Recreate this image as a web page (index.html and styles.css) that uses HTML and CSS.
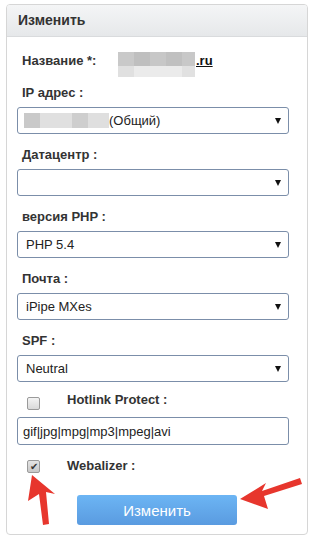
FILE: index.html
```html
<!DOCTYPE html>
<html>
  <head>
    <meta charset="UTF-8" />
    <title>Изменить</title>
    <link rel="stylesheet" href="styles.css">
  </head>
  <body>
    <div class="panel">
      <div class="panel-head">Изменить</div>
      <div class="panel-body">
        <div class="name-row">
          <div class="label name-label">Название *:</div>
          <div class="blur">
            <div class="blur-top">
              <span class="c1"></span><span class="c2"></span><span class="c3"></span><span class="c4"></span><span class="c5"></span>
            </div>
            <div class="blur-bottom">
              <span class="c6"></span><span class="c7"></span><span class="c8"></span>
            </div>
          </div>
          <a class="domain" href="#">.ru</a>
        </div>

        <div class="field">
          <div class="label">IP адрес :</div>
          <div class="select">
            <span class="ip-blur"><i class="b1"></i><i class="b2"></i><i class="b3"></i><i class="b4"></i></span>(Общий)
          </div>
        </div>
        <div class="field">
          <div class="label">Датацентр :</div>
          <div class="select"></div>
        </div>
        <div class="field">
          <div class="label">версия PHP :</div>
          <div class="select">PHP 5.4</div>
        </div>
        <div class="field">
          <div class="label">Почта :</div>
          <div class="select">iPipe MXes</div>
        </div>
        <div class="field">
          <div class="label">SPF :</div>
          <div class="select">Neutral</div>
        </div>
        <div class="field">
          <div class="check-row">
            <span class="check"></span>
            <span class="label">Hotlink Protect :</span>
          </div>
          <div class="text-input">gif|jpg|mpg|mp3|mpeg|avi</div>
        </div>
        <div class="check-row">
          <span class="check checked">&#10004;</span>
          <span class="label">Webalizer :</span>
        </div>
        <div class="actions">
          <button class="submit">Изменить</button>
        </div>
      </div>
    </div>

    <svg class="arrows" width="316" height="544" viewBox="0 0 316 544">
      <polygon points="32,475 55,494 46,492 49,524 43,525 39,494 28,501" />
      <polygon points="240,499 266,483 262,491 300,478 302,484 264,496 268,509" />
    </svg>
  </body>
</html>
```

FILE: styles.css
```css
body {
  margin: 0;
  background: #fff;
  font-family: 'Liberation Sans', Arial, sans-serif;
  color: #333;
}
.panel {
  width: 300px;
  margin: 4px 0 0 6px;
  border: 1px solid #d6d6d6;
  border-radius: 4px;
  overflow: hidden;
}
.panel-head {
  height: 31px;
  line-height: 31px;
  padding-left: 11px;
  font-size: 14px;
  font-weight: bold;
  color: #333;
  background: linear-gradient(#f4f5f6, #e6e8ea);
  border-bottom: 1px solid #d9dbdd;
}
.panel-body {
  padding: 15px 18px 9px 10px;
}
.label {
  font-size: 13px;
  font-weight: bold;
  line-height: 16px;
  color: #333;
  padding-left: 5px;
}
.name-row {
  display: flex;
  align-items: flex-start;
  height: 26px;
  margin-bottom: 7px;
}
.name-label {
  width: 96px;
  padding-top: 1px;
}
.blur {
  width: 77px;
}
.blur-top, .blur-bottom {
  display: flex;
}
.blur-top span {
  height: 14px;
}
.blur-bottom span {
  height: 11px;
}
.c1 { width: 16px; background: #c9c9c9; }
.c2 { width: 16px; background: #bfbfbf; }
.c3 { width: 16px; background: #c7c7c7; }
.c4 { width: 16px; background: #c0c0c0; }
.c5 { width: 13px; background: #c8c8c8; }
.c6 { width: 16px; background: #e0e0e0; }
.c7 { width: 48px; background: #ebebeb; }
.c8 { width: 13px; background: #e1e1e1; }
.domain {
  margin-left: 1px;
  padding-top: 1px;
  font-size: 13px;
  font-weight: bold;
  line-height: 16px;
  color: #111;
}
.field {
  margin-bottom: 13px;
}
.field .label {
  margin-bottom: 6px;
}
.select, .text-input {
  position: relative;
  height: 25px;
  line-height: 25px;
  border: 1px solid #7b8ea9;
  border-radius: 3px;
  background: #fff;
  font-size: 13px;
  color: #222;
  padding-left: 8px;
  display: flex;
  align-items: center;
}
.select::after {
  content: '';
  position: absolute;
  right: 7px;
  top: 10px;
  border-left: 3.5px solid transparent;
  border-right: 3.5px solid transparent;
  border-top: 6px solid #111;
}
.text-input {
  padding-left: 5px;
  height: 26px;
}
.ip-blur {
  display: flex;
  height: 15px;
  margin-left: -2px;
}
.ip-blur i {
  display: block;
  height: 15px;
}
.b1 { width: 16px; background: #c9c9c9; }
.b2 { width: 32px; background: #e0e0e0; }
.b3 { width: 16px; background: #cecece; }
.b4 { width: 21px; background: #dfdfdf; }
.check-row {
  display: flex;
  align-items: center;
  height: 16px;
  margin-bottom: 6px;
}
.check {
  width: 11px;
  height: 11px;
  margin: 0 22px 0 10px;
  border: 1px solid #9a9a9a;
  border-radius: 2px;
  background: linear-gradient(#f4f4f4, #d9d9d9);
  font-size: 10px;
  line-height: 11px;
  text-align: center;
  color: #333;
}
.check.checked {
  background: linear-gradient(#e4e4e4, #c8c8c8);
}
.actions {
  display: flex;
  justify-content: center;
  margin-top: 21px;
  padding-left: 8px;
}
.submit {
  width: 160px;
  height: 30px;
  border: none;
  border-radius: 3px;
  background: linear-gradient(#6cb5f4, #5a9be0);
  color: #fff;
  font-family: 'Liberation Sans', Arial, sans-serif;
  font-size: 15px;
  cursor: pointer;
}
.arrows {
  position: absolute;
  left: 0;
  top: 0;
  pointer-events: none;
}
.arrows polygon {
  fill: #e7362d;
}
```
